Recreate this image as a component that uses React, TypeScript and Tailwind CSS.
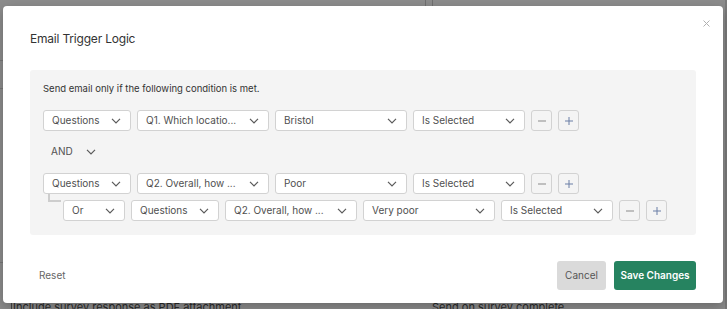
import React from "react";

const Chevron = () => (
  <svg width="10" height="6" viewBox="0 0 10 6" className="shrink-0">
    <polyline points="1,0.8 5,4.8 9,0.8" fill="none" stroke="#5a5a5a" strokeWidth="1.2" />
  </svg>
);

function Select({ label, w, bare }: { label: string; w: string; bare?: boolean }) {
  return (
    <div
      className={`${w} h-[21px] flex items-center justify-between pl-[8px] pr-[9px] rounded-[3px] ${
        bare ? "" : "border border-[#d2d2d2] bg-white"
      }`}
    >
      <span className="text-[10px] text-[#505050] whitespace-nowrap">{label}</span>
      <Chevron />
    </div>
  );
}

function IconBtn({ kind }: { kind: "minus" | "plus" }) {
  return (
    <div className="w-[21px] h-[21px] border border-[#d2d2d2] rounded-[3px] flex items-center justify-center">
      <svg width="10" height="10" viewBox="0 0 10 10">
        <line x1="1" y1="5" x2="9" y2="5" stroke={kind === "minus" ? "#8a8a8a" : "#6a7fa6"} strokeWidth="1" />
        {kind === "plus" && <line x1="5" y1="1" x2="5" y2="9" stroke="#6a7fa6" strokeWidth="1" />}
      </svg>
    </div>
  );
}

function Row({ items }: { items: [string, string][] }) {
  return (
    <div className="flex items-center gap-[6px]">
      {items.map(([l, w], i) => (
        <Select key={i} label={l} w={w} />
      ))}
      <IconBtn kind="minus" />
      <IconBtn kind="plus" />
    </div>
  );
}

export default function App() {
  return (
    <div
      className="relative w-[727px] h-[309px] overflow-hidden bg-[#8c8c8c]"
      style={{ fontFamily: "Inter, 'Noto Sans', sans-serif" }}
    >
      {/* underlying page (dimmed) */}
      <div className="absolute left-[425px] top-0 w-[1px] h-[8px] bg-[#707070]" />
      <div className="absolute left-[432px] top-0 w-[1px] h-[8px] bg-[#707070]" />
      <div className="absolute left-0 top-[60px] w-[3px] h-[1px] bg-[#777]" />
      <div className="absolute left-0 top-[88px] w-[3px] h-[1px] bg-[#777]" />
      <div className="absolute left-0 top-[262px] w-[3px] h-[1px] bg-[#777]" />
      <div className="absolute left-[725px] top-0 w-[2px] h-[309px] bg-[#7a7a7a]" />
      <div className="absolute left-[11px] top-[300px] w-[1px] h-[9px] bg-[#444]" />
      <div className="absolute left-[13px] top-[300px] text-[11px] leading-[14px] text-[#2a2a2a] whitespace-nowrap">
        Include survey response as PDF attachment
      </div>
      <div className="absolute left-[432px] top-[300px] text-[11px] leading-[14px] text-[#2a2a2a] whitespace-nowrap">
        Send on survey complete
      </div>

      {/* modal */}
      <div className="absolute left-[3px] top-[6px] w-[720px] h-[297px] bg-white rounded-[4px] shadow-[0_4px_12px_rgba(0,0,0,0.25)] flex flex-col">
        <div className="relative px-[27px] pt-[25px]">
          <div className="text-[12px] leading-[16px] text-[#333] tracking-[-0.2px]">Email Trigger Logic</div>
          <svg className="absolute left-[700px] top-[14px]" width="7" height="7" viewBox="0 0 7 7">
            <line x1="0.5" y1="0.5" x2="6.5" y2="6.5" stroke="#b0b0b0" strokeWidth="1" />
            <line x1="6.5" y1="0.5" x2="0.5" y2="6.5" stroke="#b0b0b0" strokeWidth="1" />
          </svg>
        </div>

        <div className="mx-[27px] mt-[23px] bg-[#f4f4f4] rounded-[3px] px-[13px] pt-[12px] pb-[14px]">
          <div className="text-[9.5px] leading-[14px] text-[#333]">
            Send email only if the following condition is met.
          </div>
          <div className="mt-[14px]">
            <Row
              items={[
                ["Questions", "w-[88px]"],
                ["Q1. Which locatio...", "w-[132px]"],
                ["Bristol", "w-[132px]"],
                ["Is Selected", "w-[112px]"],
              ]}
            />
          </div>
          <div className="mt-[10px] mb-[11px] h-[21px] flex">
            <Select label="AND" w="w-[62px]" bare />
          </div>
          <Row
            items={[
              ["Questions", "w-[88px]"],
              ["Q2. Overall, how ...", "w-[132px]"],
              ["Poor", "w-[132px]"],
              ["Is Selected", "w-[112px]"],
            ]}
          />
          <div className="flex mt-[6px]">
            <div className="w-[20px] h-[21px] flex shrink-0">
              <div className="ml-[5px] w-[13px] h-[8px] border-l-2 border-b-2 border-[#cdcdcd] -mt-[6px]" />
            </div>
            <div className="flex items-center gap-[6px]">
              <Select label="Or" w="w-[62px]" />
              <Select label="Questions" w="w-[88px]" />
              <Select label="Q2. Overall, how ..." w="w-[132px]" />
              <Select label="Very poor" w="w-[132px]" />
              <Select label="Is Selected" w="w-[112px]" />
              <IconBtn kind="minus" />
              <IconBtn kind="plus" />
            </div>
          </div>
        </div>

        <div className="mt-auto mb-[13px] px-[27px] flex items-center">
          <div className="pl-[9px] text-[10px] text-[#666]">Reset</div>
          <div className="ml-auto flex gap-[8px]">
            <div className="w-[49px] h-[29px] rounded-[3px] bg-[#dadada] flex items-center justify-center text-[10px] text-[#555]">
              Cancel
            </div>
            <div className="w-[82px] h-[29px] rounded-[3px] bg-[#268360] flex items-center justify-center text-[10px] font-semibold text-white">
              Save Changes
            </div>
          </div>
        </div>
      </div>
    </div>
  );
}
